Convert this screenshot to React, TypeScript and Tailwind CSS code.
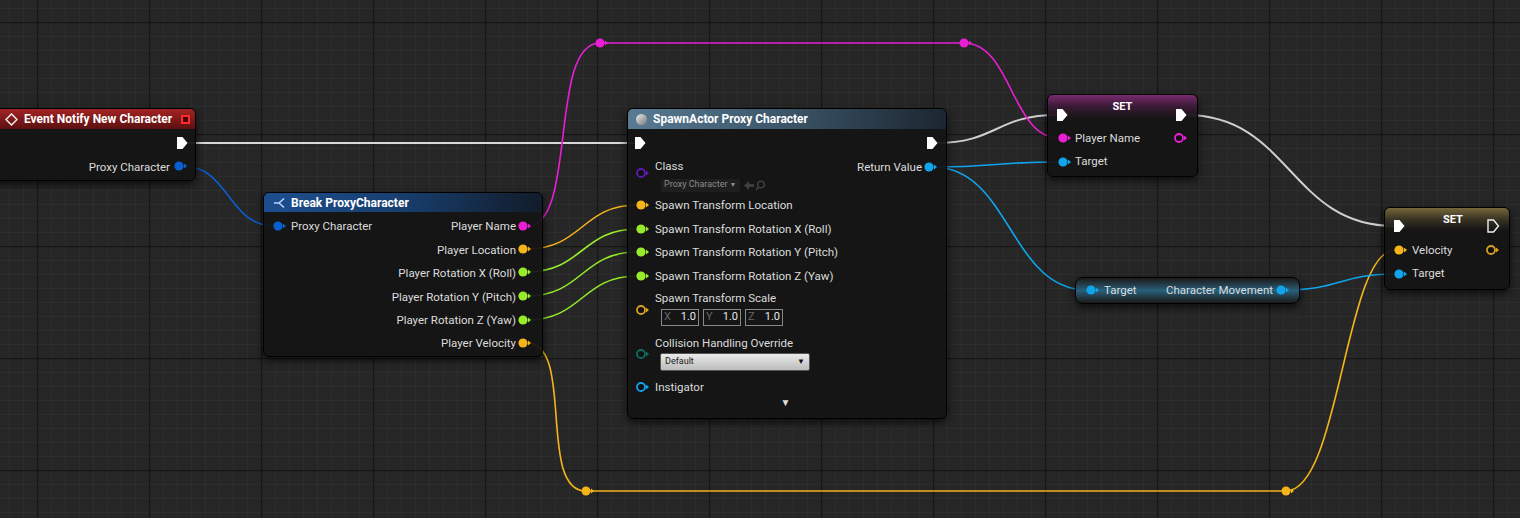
import React from 'react';

type PinKind = 'data' | 'hollow' | 'exec' | 'execHollow';
type Pin = { x: number; y: number; c: string; k: PinKind };

const PINK = '#ea1ed4';
const YEL = '#f4b41a';
const GRN = '#98ea2c';
const BLUE = '#0a5fd0';
const LBLUE = '#10a4ec';

const pins: Pin[] = [
  // event
  { x: 182, y: 143, c: '#fff', k: 'exec' },
  { x: 179, y: 166, c: BLUE, k: 'data' },
  // break
  { x: 278, y: 226, c: BLUE, k: 'data' },
  { x: 523, y: 226, c: PINK, k: 'data' },
  { x: 523, y: 249, c: YEL, k: 'data' },
  { x: 523, y: 272, c: GRN, k: 'data' },
  { x: 523, y: 296, c: GRN, k: 'data' },
  { x: 523, y: 320, c: GRN, k: 'data' },
  { x: 523, y: 343, c: YEL, k: 'data' },
  // spawn
  { x: 640, y: 143, c: '#fff', k: 'exec' },
  { x: 932, y: 143, c: '#fff', k: 'exec' },
  { x: 929, y: 167, c: LBLUE, k: 'data' },
  { x: 641, y: 173, c: '#5b1bb0', k: 'hollow' },
  { x: 641, y: 205, c: YEL, k: 'data' },
  { x: 641, y: 229, c: GRN, k: 'data' },
  { x: 641, y: 252, c: GRN, k: 'data' },
  { x: 641, y: 276, c: GRN, k: 'data' },
  { x: 641, y: 310, c: '#d9a21a', k: 'hollow' },
  { x: 641, y: 354, c: '#0c6c64', k: 'hollow' },
  { x: 641, y: 387, c: LBLUE, k: 'hollow' },
  // set1
  { x: 1062, y: 115, c: '#fff', k: 'exec' },
  { x: 1181, y: 115, c: '#fff', k: 'exec' },
  { x: 1063, y: 138, c: PINK, k: 'data' },
  { x: 1179, y: 138, c: PINK, k: 'hollow' },
  { x: 1063, y: 162, c: LBLUE, k: 'data' },
  // char move
  { x: 1091, y: 290, c: LBLUE, k: 'data' },
  { x: 1281, y: 290, c: LBLUE, k: 'data' },
  // set2
  { x: 1399, y: 226, c: '#fff', k: 'exec' },
  { x: 1493, y: 226, c: '#eee', k: 'execHollow' },
  { x: 1399, y: 250, c: YEL, k: 'data' },
  { x: 1491, y: 250, c: '#d9a21a', k: 'hollow' },
  { x: 1399, y: 274, c: LBLUE, k: 'data' },
];

const curve = (x1: number, y1: number, x2: number, y2: number) => {
  const t = Math.max(40, Math.abs(x2 - x1) * 0.5);
  return `M${x1},${y1} C${x1 + t},${y1} ${x2 - t},${y2} ${x2},${y2}`;
};

const wires: { d: string; c: string; w?: number }[] = [
  { d: 'M186,143 L636,143', c: '#d8d8d8', w: 2 },
  { d: curve(936, 143, 1057, 115), c: '#cfcfcf', w: 2 },
  { d: curve(1186, 115, 1394, 226), c: '#cfcfcf', w: 2 },
  { d: curve(183, 166, 274, 226), c: BLUE },
  { d: 'M527,226 C578,226 548,43 600,43', c: PINK },
  { d: 'M600,43 L964,43', c: PINK },
  { d: curve(964, 43, 1059, 138), c: PINK },
  { d: curve(527, 249, 637, 205), c: YEL },
  { d: curve(527, 272, 637, 229), c: GRN },
  { d: curve(527, 296, 637, 252), c: GRN },
  { d: curve(527, 320, 637, 276), c: GRN },
  { d: 'M527,343 C575,343 537,491 586,491', c: YEL },
  { d: 'M586,491 L1286,491', c: YEL },
  { d: 'M1286,491 C1340,491 1345,250 1395,250', c: YEL },
  { d: curve(933, 167, 1059, 162), c: LBLUE },
  { d: curve(933, 167, 1087, 290), c: LBLUE },
  { d: curve(1285, 290, 1395, 274), c: LBLUE },
];

const PinShape: React.FC<{ p: Pin }> = ({ p }) => {
  if (p.k === 'exec' || p.k === 'execHollow') {
    const d = `M${p.x - 5},${p.y - 6} h5.5 l5,6 l-5,6 h-5.5 z`;
    return p.k === 'exec' ? (
      <path d={d} fill={p.c} />
    ) : (
      <path d={d} fill="none" stroke={p.c} strokeWidth={1.4} />
    );
  }
  return (
    <g>
      {p.k === 'data' ? (
        <circle cx={p.x} cy={p.y} r={4.6} fill={p.c} />
      ) : (
        <circle cx={p.x} cy={p.y} r={4} fill="#111" stroke={p.c} strokeWidth={1.8} />
      )}
      <path d={`M${p.x + 5},${p.y - 2.5} l3,2.5 l-3,2.5 z`} fill={p.c} />
    </g>
  );
};

const label = 'text-[11.5px] text-[#dcdcdc] leading-none whitespace-nowrap';
const nodeBody =
  'absolute rounded-[6px] border border-black bg-[#141414f0] shadow-[0_3px_8px_rgba(0,0,0,0.7)] overflow-hidden';

const Row: React.FC<{ left?: string; right?: string }> = ({ left, right }) => (
  <div className="flex h-[23.4px] items-center justify-between">
    <span className={label}>{left}</span>
    <span className={label}>{right}</span>
  </div>
);

export default function App() {
  return (
    <div
      className="relative w-[1520px] h-[518px] overflow-hidden bg-[#262626]"
      style={{ fontFamily: 'Roboto, "Noto Sans", sans-serif' }}
    >
      <svg className="absolute inset-0" width={1520} height={518}>
        <defs>
          <pattern id="minor" x={37} y={22} width={14} height={14} patternUnits="userSpaceOnUse">
            <path d="M0,0 H14 M0,0 V14" stroke="#333333" strokeWidth={1} fill="none" />
          </pattern>
          <pattern id="major" x={37} y={22} width={112} height={112} patternUnits="userSpaceOnUse">
            <path d="M0,0.5 H112 M0.5,0 V112" stroke="#151515" strokeWidth={1.5} fill="none" />
          </pattern>
        </defs>
        <rect width={1520} height={518} fill="url(#minor)" />
        <rect width={1520} height={518} fill="url(#major)" />
        {wires.map((w, i) => (
          <path key={i} d={w.d} stroke={w.c} strokeWidth={w.w ?? 1.6} fill="none" />
        ))}
        {[
          [600, 43, PINK],
          [964, 43, PINK],
          [586, 491, YEL],
          [1286, 491, YEL],
        ].map(([x, y, c], i) => (
          <g key={i}>
            <circle cx={x as number} cy={y as number} r={4.5} fill={c as string} />
            <path d={`M${(x as number) + 5},${(y as number) - 2.5} l3,2.5 l-3,2.5 z`} fill={c as string} />
          </g>
        ))}
      </svg>

      {/* Event Notify New Character */}
      <div className={`${nodeBody} left-[-12px] top-[108px] w-[208px] h-[73px]`}>
        <div className="flex h-[20px] items-center gap-[6px] pl-[16px] bg-gradient-to-b from-[#a42424] to-[#5c1010]">
          <svg width="13" height="13" viewBox="0 0 13 13">
            <path d="M6.5,1 L12,6.5 L6.5,12 L1,6.5 Z" fill="none" stroke="#eee" strokeWidth="1.5" />
          </svg>
          <span className="text-[12px] font-bold text-white">Event Notify New Character</span>
          <span className="ml-auto mr-[5px] w-[9px] h-[9px] border-2 border-[#ff2a2a] bg-[#400]" />
        </div>
        <div className="pt-[3.5px] pr-[25px]">
          <Row />
          <Row right="Proxy Character" />
        </div>
      </div>

      {/* Break ProxyCharacter */}
      <div className={`${nodeBody} left-[263px] top-[192px] w-[280px] h-[165px]`}>
        <div className="flex h-[19px] items-center gap-[5px] pl-[9px] bg-gradient-to-r from-[#1d4e8e] via-[#173e6e] to-[#111c2a]">
          <svg width="13" height="12" viewBox="0 0 13 12">
            <path d="M1,6 H6 M6,6 L11,1.5 M6,6 L11,10.5" stroke="#b8d4ff" strokeWidth="1.6" fill="none" />
          </svg>
          <span className="text-[12px] font-bold text-white">Break ProxyCharacter</span>
        </div>
        <div className="pt-[3.5px] pl-[27px] pr-[26px]">
          <Row left="Proxy Character" right="Player Name" />
          <Row right="Player Location" />
          <Row right="Player Rotation X (Roll)" />
          <Row right="Player Rotation Y (Pitch)" />
          <Row right="Player Rotation Z (Yaw)" />
          <Row right="Player Velocity" />
        </div>
      </div>

      {/* SpawnActor Proxy Character */}
      <div className={`${nodeBody} left-[627px] top-[108px] w-[320px] h-[311px]`}>
        <div className="flex h-[20px] items-center gap-[6px] pl-[8px] bg-gradient-to-r from-[#587b94] via-[#3b5568] to-[#1c2630]">
          <span className="w-[11px] h-[11px] rounded-full bg-gradient-to-br from-[#eee] to-[#777]" />
          <span className="text-[12px] font-bold text-white">SpawnActor Proxy Character</span>
        </div>
        <div className="flex flex-col pl-[27px] pr-[24px] pt-[31px]">
          <div className="flex h-[32px] justify-between">
            <div className="flex flex-col gap-[6px] pt-[1px]">
              <span className={label}>Class</span>
              <div className="ml-[6px] flex items-center gap-[3px]">
                <span className="flex items-center gap-[2px] rounded-[2px] bg-[#1e1e1e] px-[3px] h-[13px] text-[9px] text-[#8a8a8a]">
                  Proxy Character <span className="text-[7px]">▼</span>
                </span>
                <svg width="24" height="11" viewBox="0 0 24 11">
                  <path d="M1,5.5 L6,1 V4 H11 V7 H6 V10 Z" fill="#3e3e3e" />
                  <circle cx="18" cy="4.5" r="3.3" fill="none" stroke="#3e3e3e" strokeWidth="1.5" />
                  <path d="M15.5,7 L13,10" stroke="#3e3e3e" strokeWidth="1.8" />
                </svg>
              </div>
            </div>
            <span className={`${label} pt-[2px]`}>Return Value</span>
          </div>
          <div className="flex flex-col pt-[2px]">
            {[
              'Spawn Transform Location',
              'Spawn Transform Rotation X (Roll)',
              'Spawn Transform Rotation Y (Pitch)',
              'Spawn Transform Rotation Z (Yaw)',
            ].map((t) => (
              <div key={t} className="flex h-[23.6px] items-center">
                <span className={label}>{t}</span>
              </div>
            ))}
          </div>
          <div className="flex flex-col gap-[4px] pt-[5px] h-[46px]">
            <span className={label}>Spawn Transform Scale</span>
            <div className="ml-[6px] flex gap-[4px]">
              {['X', 'Y', 'Z'].map((a) => (
                <span
                  key={a}
                  className="flex h-[17px] w-[38px] items-center justify-between border border-[#888] px-[2px] text-[11px]"
                >
                  <span className="text-[#666]">{a}</span>
                  <span className="text-[#e8e8e8]">1.0</span>
                </span>
              ))}
            </div>
          </div>
          <div className="flex flex-col gap-[3px] pt-[4px] h-[42px]">
            <span className={label}>Collision Handling Override</span>
            <div className="ml-[5px] flex h-[18px] w-[150px] items-center justify-between rounded-[2px] border border-[#555] bg-gradient-to-b from-[#eaeaea] to-[#bcbcbc] px-[4px] text-[9px] text-[#222]">
              Default
              <span className="text-[8px] text-[#111]">▼</span>
            </div>
          </div>
          <div className="flex h-[22px] items-center">
            <span className={label}>Instigator</span>
          </div>
          <span className="self-center pr-[6px] text-[10px] leading-none text-[#ddd]">▼</span>
        </div>
      </div>

      {/* SET Player Name */}
      <div className={`${nodeBody} left-[1047px] top-[94px] w-[151px] h-[83px]`}>
        <div className="h-[23px] pt-[4px] text-center text-[11px] font-bold text-white bg-gradient-to-b from-[#7a2a70] via-[#3a1a36] to-transparent">
          SET
        </div>
        <div className="pl-[27px] pr-[20px] pt-[9px]">
          <Row left="Player Name" />
          <Row left="Target" />
        </div>
      </div>

      {/* Character Movement */}
      <div className="absolute left-[1075px] top-[277px] w-[225px] h-[27px] rounded-[8px] border border-black bg-gradient-to-b from-[#1a1a1a] via-[#27607c] to-[#1a1a1a] shadow-[0_3px_8px_rgba(0,0,0,0.7)] flex items-center justify-between pl-[28px] pr-[26px]">
        <span className={label}>Target</span>
        <span className={label}>Character Movement</span>
      </div>

      {/* SET Velocity */}
      <div className={`${nodeBody} left-[1384px] top-[207px] w-[126px] h-[83px]`}>
        <div className="h-[22px] pt-[4px] pl-[12px] text-center text-[11px] font-bold text-white bg-gradient-to-b from-[#77683a] via-[#3a3424] to-transparent">
          SET
        </div>
        <div className="pl-[27px] pt-[9px]">
          <Row left="Velocity" />
          <Row left="Target" />
        </div>
      </div>

      <svg className="absolute inset-0 pointer-events-none" width={1520} height={518}>
        {pins.map((p, i) => (
          <PinShape key={i} p={p} />
        ))}
      </svg>
    </div>
  );
}
